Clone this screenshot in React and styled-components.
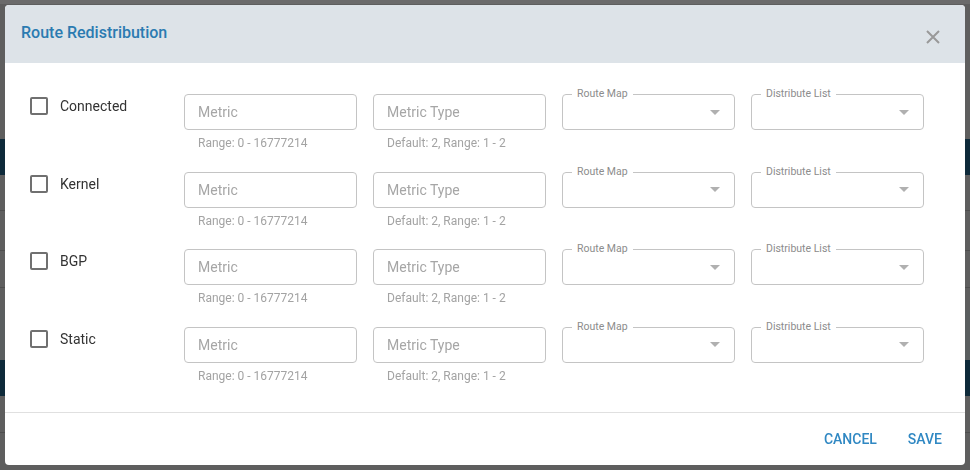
import React, { useState } from 'react';
import styled, { createGlobalStyle } from 'styled-components';

const GlobalStyle = createGlobalStyle`
    html, body {
        margin: 0;
        padding: 0;
        width: 970px;
        height: 470px;
        overflow: hidden;
        font-family: Roboto, "Liberation Sans", Arial, sans-serif;
    }
`;

// page that sits dimmed behind the dialog
const Page = styled.div`
    display: flex;
    flex-direction: column;
    height: 470px;
    background: #5e5e5e;
`;

const PageBand = styled.div`
    height: ${(p) => p.$h}px;
    background: ${(p) => p.$bg || '#5e5e5e'};
    border-bottom: ${(p) => (p.$line ? '1px solid #4e4e4e' : 'none')};
    flex-shrink: 0;
`;

const Overlay = styled.div`
    position: fixed;
    inset: 0;
    display: flex;
    align-items: center;
    justify-content: center;
`;

const Dialog = styled.div`
    width: 960px;
    background: #ffffff;
    border-radius: 4px;
    overflow: hidden;
    display: flex;
    flex-direction: column;
`;

const Header = styled.div`
    height: 58px;
    display: flex;
    align-items: center;
    justify-content: space-between;
    padding: 0 25px 0 16px;
    background: #dde3e8;
`;

const Title = styled.h2`
    margin: 0 0 4px;
    font-size: 16px;
    font-weight: 500;
    color: #2b7bb1;
`;

const CloseButton = styled.button`
    border: none;
    background: none;
    padding: 0;
    margin-top: 6px;
    width: 14px;
    height: 14px;
    display: flex;
    cursor: pointer;
`;

const Content = styled.div`
    height: 349px;
    box-sizing: border-box;
    padding: 31px 41px 0 25px;
    display: flex;
    flex-direction: column;
    gap: 21.67px;
`;

const Row = styled.div`
    display: grid;
    grid-template-columns: 138px repeat(4, minmax(0, 1fr));
    column-gap: 16px;
    height: 56px;
`;

const CheckCell = styled.label`
    display: flex;
    align-items: center;
    gap: 12px;
    height: 18px;
    margin-top: 3px;
    font-size: 14px;
    color: #333333;
    cursor: pointer;
`;

const Box = styled.span`
    width: 18px;
    height: 18px;
    box-sizing: border-box;
    border: 2px solid #707070;
    border-radius: 2px;
    background: ${(p) => (p.$checked ? '#2b7bb1' : 'transparent')};
    border-color: ${(p) => (p.$checked ? '#2b7bb1' : '#707070')};
`;

const Field = styled.div`
    display: flex;
    flex-direction: column;
    min-width: 0;
`;

const Input = styled.input`
    width: 100%;
    height: 36px;
    box-sizing: border-box;
    border: 1px solid #c4c4c4;
    border-radius: 4px;
    padding: 0 13px;
    font-family: inherit;
    font-size: 14px;
    color: #333333;
    outline: none;

    &::placeholder {
        color: #a6a6a6;
    }
`;

const Helper = styled.span`
    margin: 6px 0 0 14px;
    font-size: 12px;
    line-height: 14px;
    color: #a3a3a3;
    white-space: nowrap;
`;

const Select = styled.div`
    position: relative;
    height: 36px;
    box-sizing: border-box;
    border: 1px solid #c4c4c4;
    border-radius: 4px;
    display: flex;
    align-items: center;
    justify-content: flex-end;
    padding-right: 14px;
`;

const Legend = styled.span`
    position: absolute;
    top: -8px;
    left: 9px;
    padding: 0 5px;
    background: #ffffff;
    font-size: 10.5px;
    line-height: 13px;
    color: #8c8c8c;
    white-space: nowrap;
`;

const Arrow = styled.span`
    width: 0;
    height: 0;
    border-left: 5px solid transparent;
    border-right: 5px solid transparent;
    border-top: 5px solid #b0b0b0;
`;

const Footer = styled.div`
    height: 53px;
    box-sizing: border-box;
    border-top: 1px solid #e0e0e0;
    display: flex;
    align-items: center;
    justify-content: flex-end;
    gap: 15px;
    padding: 0 15px 1px 0;
`;

const ActionButton = styled.button`
    border: none;
    background: none;
    padding: 6px 8px;
    font-family: inherit;
    font-size: 14px;
    font-weight: 500;
    text-transform: uppercase;
    color: #3088c3;
    cursor: pointer;
`;

const protocols = ['Connected', 'Kernel', 'BGP', 'Static'];

function App() {
    const [checked, setChecked] = useState({});

    return (
        <>
            <GlobalStyle />
            <Page>
                <PageBand $h={4} $bg="#6b6b6b" />
                <PageBand $h={135} />
                <PageBand $h={36} $bg="#0e2a3a" />
                <PageBand $h={35} $line />
                <PageBand $h={39} $line />
                <PageBand $h={36} $line />
                <PageBand $h={22} />
                <PageBand $h={50} $bg="#5a5e5f" />
                <PageBand $h={36} $bg="#0e2a3a" />
                <PageBand $h={36} $line />
            </Page>
            <Overlay>
                <Dialog>
                    <Header>
                        <Title>Route Redistribution</Title>
                        <CloseButton aria-label="close">
                            <svg width="14" height="14" viewBox="0 0 14 14">
                                <path d="M1 1L13 13M13 1L1 13" stroke="#999999" strokeWidth="2" />
                            </svg>
                        </CloseButton>
                    </Header>
                    <Content>
                        {protocols.map((name) => (
                            <Row key={name}>
                                <CheckCell onClick={() => setChecked({ ...checked, [name]: !checked[name] })}>
                                    <Box $checked={checked[name]} />
                                    {name}
                                </CheckCell>
                                <Field>
                                    <Input placeholder="Metric" />
                                    <Helper>Range: 0 - 16777214</Helper>
                                </Field>
                                <Field>
                                    <Input placeholder="Metric Type" />
                                    <Helper>Default: 2, Range: 1 - 2</Helper>
                                </Field>
                                <Field>
                                    <Select>
                                        <Legend>Route Map</Legend>
                                        <Arrow />
                                    </Select>
                                </Field>
                                <Field>
                                    <Select>
                                        <Legend>Distribute List</Legend>
                                        <Arrow />
                                    </Select>
                                </Field>
                            </Row>
                        ))}
                    </Content>
                    <Footer>
                        <ActionButton>Cancel</ActionButton>
                        <ActionButton>Save</ActionButton>
                    </Footer>
                </Dialog>
            </Overlay>
        </>
    );
}

export default App;
